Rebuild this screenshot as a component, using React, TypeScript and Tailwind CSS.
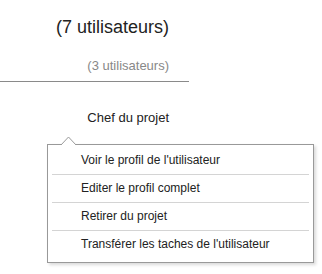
import React from "react";

const ITEMS = [
  "Voir le profil de l'utilisateur",
  "Editer le profil complet",
  "Retirer du projet",
  "Transférer les taches de l'utilisateur",
];

export default function App() {
  return (
    <div
      className="w-[322px] h-[274px] bg-white text-[#222] overflow-hidden"
      style={{ fontFamily: '"Liberation Sans", Arial, sans-serif' }}
    >
      {/* Header column */}
      <div className="w-[189px] pt-[17px]">
        <div className="pr-[20px] text-right text-[18px] leading-[21px]">(7 utilisateurs)</div>
        <div className="mt-[20px] pr-[20px] text-right text-[13px] leading-[16px] text-[#888]">
          (3 utilisateurs)
        </div>
        <div className="mt-[7px] h-px bg-[#8a8a8a]" />
        <div className="mt-[28px] pr-[20px] text-right text-[13px] leading-[16px]">Chef du projet</div>
      </div>

      {/* Context menu */}
      <div className="relative mt-[18px] ml-[47px] w-[267px] border border-[#999] bg-white pt-[2px] pb-[3px] shadow-[2px_2px_3px_rgba(0,0,0,0.15)]">
        <svg className="absolute left-[12px] top-[-9px]" width="17" height="9" viewBox="0 0 17 9">
          <polyline points="0.5,9.5 8.5,1 16.5,9.5" fill="white" stroke="#999" strokeWidth="1" />
        </svg>
        {ITEMS.map((label, i) => (
          <div
            key={label}
            className={
              i < ITEMS.length - 1
                ? "mx-[4px] h-[28px] border-b border-[#d4d4d4] pl-[29px] text-[12px] leading-[27px]"
                : "mx-[4px] h-[28px] pl-[29px] text-[12px] leading-[27px]"
            }
          >
            {label}
          </div>
        ))}
      </div>
    </div>
  );
}
